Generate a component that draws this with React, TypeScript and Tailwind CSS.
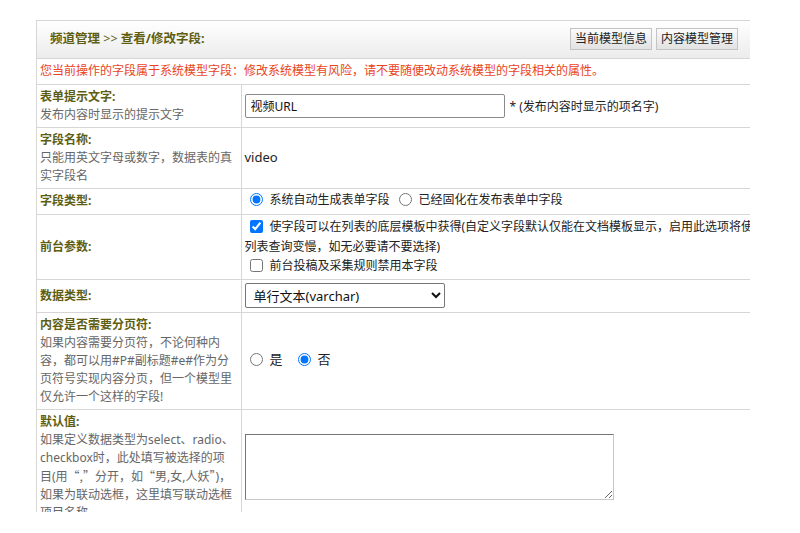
const font = {
  fontFamily: '"Noto Sans", "Noto Sans CJK SC", sans-serif',
};

function Label({ title, desc }: { title: string; desc?: React.ReactNode }) {
  return (
    <td className="border-b border-r border-[#d6d6d6] px-[3px] py-[3px] align-middle leading-[18px]">
      <div className="w-[196px]">
        <div className="font-bold text-[#5e5e12]">{title}</div>
        {desc && <div className="text-[#666]">{desc}</div>}
      </div>
    </td>
  );
}

const cjk = { fontFamily: '"Noto Sans CJK SC", sans-serif' };

export default function App() {
  return (
    <div className="min-h-[533px] bg-white pl-9 pt-5 text-[12px]" style={font}>
      <div className="h-[492px] w-[714px] overflow-hidden border-l border-t border-[#d6d6d6]">
        <table className="w-[714px] table-fixed border-collapse">
          <colgroup>
            <col className="w-[204px]" />
            <col className="w-[510px]" />
          </colgroup>
          <tbody>
            {/* header */}
            <tr className="h-[37px]">
              <td
                colSpan={2}
                className="border-b border-[#d6d6d6] bg-gradient-to-b from-white to-[#ececec] px-[13px]"
              >
                <div className="flex items-center justify-between">
                  <span className="text-[12.5px] font-bold text-[#5e5e12]">
                    频道管理 <span className="font-normal">&gt;&gt;</span> 查看/修改字段:
                  </span>
                  <div className="flex gap-1">
                    <button className="h-[22px] w-[82px] border border-[#c4c4c4] bg-gradient-to-b from-[#fafafa] to-[#e2e2e2] text-[12px] text-[#222]">
                      当前模型信息
                    </button>
                    <button className="h-[22px] w-[82px] border border-[#c4c4c4] bg-gradient-to-b from-[#fafafa] to-[#e2e2e2] text-[12px] text-[#222]">
                      内容模型管理
                    </button>
                  </div>
                </div>
              </td>
            </tr>

            {/* warning */}
            <tr className="h-[26px]">
              <td colSpan={2} className="border-b border-[#d6d6d6] px-[3px] text-[#e9441b]">
                您当前操作的字段属于系统模型字段：修改系统模型有风险，请不要随便改动系统模型的字段相关的属性。
              </td>
            </tr>

            <tr className="h-[43px]">
              <Label title="表单提示文字:" desc="发布内容时显示的提示文字" />
              <td className="border-b border-[#d6d6d6] px-[3px] text-[#222]">
                <input
                  type="text"
                  defaultValue="视频URL"
                  className="h-[24px] w-[260px] rounded-[2px] border border-[#8a8a8a] px-[5px] text-[12px] text-[#111]"
                />
                <span className="ml-[5px]">* (发布内容时显示的项名字)</span>
              </td>
            </tr>

            <tr className="h-[61px]">
              <Label title="字段名称:" desc="只能用英文字母或数字，数据表的真实字段名" />
              <td className="border-b border-[#d6d6d6] px-[3px] text-[13px] text-[#222]">video</td>
            </tr>

            <tr className="h-[26px]">
              <Label title="字段类型:" />
              <td className="border-b border-[#d6d6d6] px-[3px] text-[#222]">
                <label className="inline-flex items-center">
                  <input type="radio" name="ftype" defaultChecked className="ml-[5px] mr-[7px] size-[13px]" />
                  系统自动生成表单字段
                </label>
                <label className="ml-[4px] inline-flex items-center">
                  <input type="radio" name="ftype" className="ml-[5px] mr-[7px] size-[13px]" />
                  已经固化在发布表单中字段
                </label>
              </td>
            </tr>

            <tr className="h-[65px]">
              <Label title="前台参数:" />
              <td className="border-b border-[#d6d6d6] px-[3px] leading-[19.5px] text-[#222]">
                <div className="whitespace-nowrap">
                  <input type="checkbox" defaultChecked className="ml-[5px] mr-[7px] size-[13px] align-[-2px]" />
                  使字段可以在列表的底层模板中获得(自定义字段默认仅能在文档模板显示，启用此选项将使
                </div>
                <div className="whitespace-nowrap">列表查询变慢，如无必要请不要选择)</div>
                <div className="whitespace-nowrap">
                  <input type="checkbox" className="ml-[5px] mr-[7px] size-[13px] align-[-2px]" />
                  前台投稿及采集规则禁用本字段
                </div>
              </td>
            </tr>

            <tr className="h-[33px]">
              <Label title="数据类型:" />
              <td className="border-b border-[#d6d6d6] px-[3px]">
                <select
                  defaultValue="varchar"
                  className="h-[25px] w-[200px] rounded-[2px] border border-[#767676] pl-[4px] text-[13px] text-[#111]"
                >
                  <option value="varchar">单行文本(varchar)</option>
                  <option value="text">多行文本(text)</option>
                  <option value="htmltext">HTML文本</option>
                </select>
              </td>
            </tr>

            <tr className="h-[97px]">
              <Label
                title="内容是否需要分页符:"
                desc="如果内容需要分页符，不论何种内容，都可以用#P#副标题#e#作为分页符号实现内容分页，但一个模型里仅允许一个这样的字段!"
              />
              <td className="border-b border-[#d6d6d6] px-[3px] text-[13px] text-[#222]">
                <label className="inline-flex items-center">
                  <input type="radio" name="page" className="ml-[5px] mr-[7px] size-[13px]" />
                  是
                </label>
                <label className="ml-[15px] inline-flex items-center">
                  <input type="radio" name="page" defaultChecked className="mr-[7px] size-[13px]" />
                  否
                </label>
              </td>
            </tr>

            <tr className="h-[116px]">
              <Label
                title="默认值:"
                desc={
                  <>
                    如果定义数据类型为select、radio、checkbox时，此处填写被选择的项目(用
                    <span style={cjk}>“,”</span>分开，如<span style={cjk}>“</span>男,女,人妖
                    <span style={cjk}>”</span>)，如果为联动选框，这里填写联动选框项目名称
                  </>
                }
              />
              <td className="border-b border-[#d6d6d6] px-[3px]">
                <textarea className="block h-[66px] w-[369px] border border-[#c8c8c8] border-l-[#767676] border-t-[#767676]" />
              </td>
            </tr>
          </tbody>
        </table>
      </div>
    </div>
  );
}
